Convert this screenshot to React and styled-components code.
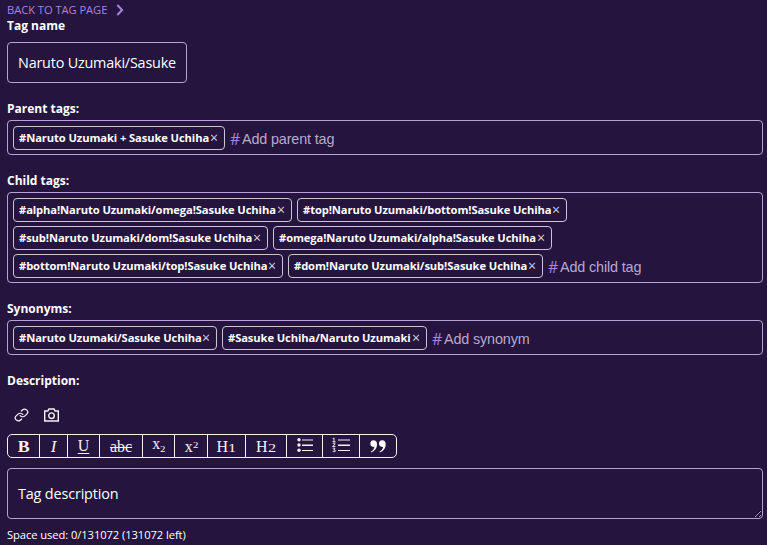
import React from 'react';
import styled, { createGlobalStyle } from 'styled-components';

const Global = createGlobalStyle`
  * { box-sizing: border-box; }
  body { margin: 0; background: #25143d; overflow: hidden; }
`;
const Page = styled.main`
  height: 545px;
  padding: 2px 4px 0 7px;
  background: #25143d;
  color: #fff;
  font: 12px/16px "Open Sans", sans-serif;
`;
const BackLink = styled.a`
  display: flex;
  align-items: center;
  height: 16px;
  color: #a883dd;
  font-size: 11.2px;
  letter-spacing: -0.06px;
  white-space: nowrap;
  svg { margin-left: 9px; }
`;
const Label = styled.label`
  display: block;
  height: 16px;
  font-weight: 700;
  font-size: 12px;
`;
const NameBox = styled.div`
  width: 180px;
  height: 41px;
  margin: 8px 0 18px;
  padding: 0 10px;
  border: 1px solid #b7a1d3;
  border-radius: 4px;
  font-size: 14.4px;
  letter-spacing: -0.2px;
  line-height: 40px;
  white-space: nowrap;
`;
const TagField = styled.div`
  display: flex;
  flex-wrap: wrap;
  align-content: flex-start;
  gap: 4px 5px;
  height: ${(p) => p.$height}px;
  margin: 3px 0 18px;
  padding: 5px;
  border: 1px solid #b7a1d3;
  border-radius: 4px;
`;
const Chip = styled.span`
  display: flex;
  align-items: center;
  width: ${(p) => p.$width}px;
  height: 24px;
  padding: 0 6px 0 5px;
  border: 1px solid #cbc4d3;
  border-radius: 4px;
  font-size: 11.2px;
  letter-spacing: -0.1px;
  font-weight: 700;
  white-space: nowrap;
`;
const Remove = styled.span`
  margin-left: auto;
  font-size: 14px;
  font-weight: 400;
  color: #d8d3df;
`;
const AddTag = styled.span`
  display: flex;
  align-items: center;
  height: 24px;
  padding-top: 2px;
  color: #b9a8cf;
  font: 14.4px/20px "Liberation Sans", Arial, sans-serif;
  letter-spacing: -0.15px;
`;
const Hash = styled.span`
  width: 12px;
  color: #a883f0;
  font: 16px/20px "Open Sans", sans-serif;
`;
const MediaRow = styled.div`
  display: flex;
  align-items: center;
  gap: 15px;
  height: 20px;
  margin: 16px 0 9px;
  padding-left: 7px;
`;
const Toolbar = styled.div`
  display: flex;
  width: 390px;
  height: 24px;
  border: 1px solid #f4f1f6;
  border-radius: 5px;
  overflow: hidden;
`;
const Tool = styled.button`
  display: flex;
  align-items: center;
  justify-content: center;
  flex: 0 0 ${(p) => p.$width}px;
  height: 22px;
  padding: 1px 0 0;
  border: 0;
  border-right: 1px solid #f4f1f6;
  background: none;
  color: #f6f3f7;
  font: 16px/20px "Liberation Serif", Georgia, serif;
  &:last-child { border-right: 0; }
  b { font-size: 17px; transform: scaleX(1.05); }
  i { font-size: 17px; }
  u { transform: translateY(-1px); text-underline-offset: 2px; text-decoration-thickness: 1px; }
  s { text-decoration-thickness: 1px; }
`;
const OldStyleDigit = styled.span`
  display: inline-block;
  font-size: 12.5px;
  transform: translateY(1px) scaleX(1.3);
  transform-origin: left center;
  padding-right: 2px;
`;
const Script = styled.span`
  display: flex;
  align-items: center;
  transform: translateY(${(p) => p.$shift}px);
`;
const ScriptDigit = styled.span`
  font-size: 9px;
  line-height: 10px;
  transform: translateY(${(p) => p.$shift}px) scaleX(1.2);
  transform-origin: left center;
`;
const ListGlyph = styled.svg`
  transform: translateY(-1.5px);
`;
const Description = styled.textarea`
  display: block;
  width: 756px;
  height: 51px;
  margin: 10px 0 8px;
  padding: 15px 10px;
  border: 1px solid #b7a1d3;
  border-radius: 4px;
  outline: 0;
  resize: vertical;
  background: transparent;
  color: #fff;
  font: 14.4px/20px "Open Sans", sans-serif;
  letter-spacing: -0.15px;
  overflow: hidden;
  &::placeholder { color: #fff; opacity: 1; }
`;
const Usage = styled.div`
  font-size: 11.2px;
  letter-spacing: -0.08px;
`;

function Tags({ height, items, add }) {
  return (
    <TagField $height={height}>
      {items.map(([name, width]) => (
        <Chip key={name} $width={width}>#{name}<Remove>×</Remove></Chip>
      ))}
      <AddTag><Hash>#</Hash>{add}</AddTag>
    </TagField>
  );
}

const LinkIcon = () => (
  <svg width="15" height="14" viewBox="0 0 24 24" preserveAspectRatio="none" fill="none" stroke="#f4f1f6" strokeWidth="2" strokeLinecap="round" strokeLinejoin="round">
    <path d="M10 13a5 5 0 0 0 7.54.54l3-3a5 5 0 0 0-7.07-7.07l-1.72 1.71" />
    <path d="M14 11a5 5 0 0 0-7.54-.54l-3 3a5 5 0 0 0 7.07 7.07l1.71-1.71" />
  </svg>
);
const CameraIcon = () => (
  <svg width="15" height="14" viewBox="0 0 15 14" fill="none" stroke="#f4f1f6" strokeWidth="1.4">
    <path d="M.7 3h3.2l1-2h5.2l1 2h3.2v10H.7Z" />
    <circle cx="7.5" cy="7.7" r="2.8" />
  </svg>
);
const BulletIcon = () => (
  <ListGlyph width="16" height="15" viewBox="0 0 16 15" fill="#f4f1f6">
    <circle cx="2" cy="2.3" r="1.7" /><circle cx="2" cy="7.5" r="1.7" /><circle cx="2" cy="12.8" r="1.7" />
    <path d="M5 2h11v1H5Zm0 5h11v1.5H5Zm0 5.5h11v1H5Z" />
  </ListGlyph>
);
const NumberIcon = () => (
  <ListGlyph width="18" height="15" viewBox="0 0 18 15" fill="#f4f1f6">
    <path d="M6 2h12v1H6Zm0 5h12v1.5H6Zm0 5.5h12v1H6Z" />
    <path fill="none" stroke="#d2cbd7" strokeWidth="1.1" d="M.7 1.2 2 .6v3.4M.5 4.1h3M.7 6c2-1.3 3 .3 1.5 1.4L.7 9h2.8M.7 10.9c2-1 3 .9.8 1.5 3 .2 1.5 2.7-.8 1.7" />
  </ListGlyph>
);
const QuoteIcon = () => (
  <svg width="16" height="13" viewBox="0 0 16 13" fill="#fff">
    <path d="M.3 3.6C.3 1.5 1.6.3 3.5.3 5.7.3 7 1.9 7 4.3c0 4-2.2 6.8-5.8 8.2l-.4-.8C3 10.5 4.3 8.9 4.4 6.8c-2.4.6-4.1-.9-4.1-3.2Z" />
    <path transform="translate(8.7 0)" d="M.3 3.6C.3 1.5 1.6.3 3.5.3 5.7.3 7 1.9 7 4.3c0 4-2.2 6.8-5.8 8.2l-.4-.8C3 10.5 4.3 8.9 4.4 6.8c-2.4.6-4.1-.9-4.1-3.2Z" />
  </svg>
);

export default function App() {
  return (
    <>
      <Global />
      <Page>
        <BackLink>
          BACK TO TAG PAGE
          <svg width="8" height="12" viewBox="0 0 8 12" fill="none" stroke="#a883dd" strokeWidth="2"><path d="m1.3 1 4.8 5-4.8 5" /></svg>
        </BackLink>
        <Label>Tag name</Label>
        <NameBox>Naruto Uzumaki/Sasuke</NameBox>
        <Label>Parent tags:</Label>
        <Tags height={35} items={[['Naruto Uzumaki + Sasuke Uchiha', 212]]} add="Add parent tag" />
        <Label>Child tags:</Label>
        <Tags
          height={91}
          items={[
            ['alpha!Naruto Uzumaki/omega!Sasuke Uchiha', 279],
            ['top!Naruto Uzumaki/bottom!Sasuke Uchiha', 270],
            ['sub!Naruto Uzumaki/dom!Sasuke Uchiha', 255],
            ['omega!Naruto Uzumaki/alpha!Sasuke Uchiha', 279],
            ['bottom!Naruto Uzumaki/top!Sasuke Uchiha', 270],
            ['dom!Naruto Uzumaki/sub!Sasuke Uchiha', 255],
          ]}
          add="Add child tag"
        />
        <Label>Synonyms:</Label>
        <Tags height={35} items={[['Naruto Uzumaki/Sasuke Uchiha', 204], ['Sasuke Uchiha/Naruto Uzumaki', 205]]} add="Add synonym" />
        <Label>Description:</Label>
        <MediaRow><LinkIcon /><CameraIcon /></MediaRow>
        <Toolbar>
          <Tool $width={32}><b>B</b></Tool>
          <Tool $width={28}><i>I</i></Tool>
          <Tool $width={32}><u>U</u></Tool>
          <Tool $width={43}><s>abc</s></Tool>
          <Tool $width={32}><Script $shift={-3}>x<ScriptDigit $shift={5}>2</ScriptDigit></Script></Tool>
          <Tool $width={33}><Script $shift={0}>x<ScriptDigit $shift={-2}>2</ScriptDigit></Script></Tool>
          <Tool $width={38}>H<OldStyleDigit>1</OldStyleDigit></Tool>
          <Tool $width={41}>H<OldStyleDigit>2</OldStyleDigit></Tool>
          <Tool $width={36}><BulletIcon /></Tool>
          <Tool $width={37}><NumberIcon /></Tool>
          <Tool $width={36}><QuoteIcon /></Tool>
        </Toolbar>
        <Description placeholder="Tag description" />
        <Usage>Space used: 0/131072 (131072 left)</Usage>
      </Page>
    </>
  );
}
